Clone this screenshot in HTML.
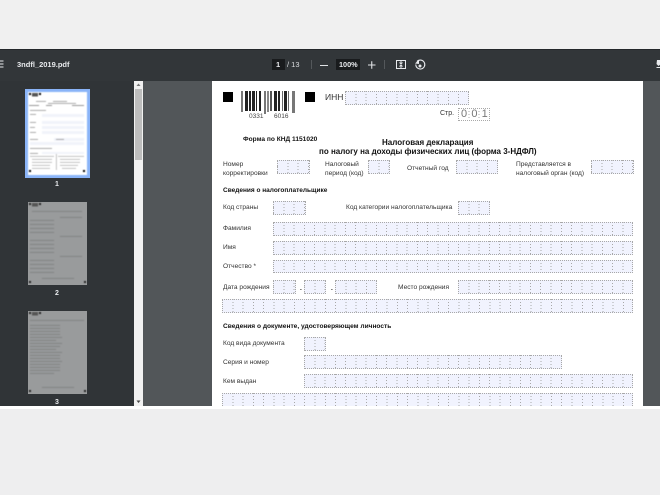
<!DOCTYPE html>
<html lang="ru"><head><meta charset="utf-8"><title>3ndfl_2019.pdf</title>
<style>
html,body{margin:0;padding:0;background:#eeeeef}
body{width:660px;height:495px;overflow:hidden;position:relative;font-family:"Liberation Sans",sans-serif}
div,span{position:absolute;box-sizing:border-box}
#w{left:0;top:0;width:660px;height:495px;filter:blur(.3px);background:#eeeeef}
.t{white-space:nowrap;color:#333;font-size:6.600px;line-height:9px}
.b{font-weight:bold;color:#111}
.f{border:1px dotted #a8a8a8;background-color:#f1f3fe;
background-image:repeating-linear-gradient(to bottom,#f1f3fe 0 2px,transparent 2px 3px),repeating-linear-gradient(to right,transparent 0 9.28px,#a8a8a8 9.28px 10.28px)}
.tb{color:#e8eaed;font-size:8px;line-height:10px;white-space:nowrap}
.th{filter:blur(.45px)}
</style></head><body><div id="w">
<div style="left:0;top:0;width:660px;height:49px;background:#f0f0f0"></div>
<div style="left:0;top:49px;width:660px;height:1px;background:#24272a"></div>
<div style="left:0;top:50px;width:660px;height:31px;background:#323639"></div>
<div style="left:0;top:81px;width:134px;height:325px;background:#303437"></div>
<div style="left:134px;top:81px;width:9px;height:325px;background:#f1f1f1"></div>
<div style="left:135px;top:89px;width:7px;height:71px;background:#bdbdbd"></div>
<svg style="position:absolute;left:134px;top:81px" width="9" height="325"><path d="M2.500 5L4.500 2.500L6.500 5Z" fill="#777"/><path d="M2.500 319.500L4.500 322L6.500 319.500Z" fill="#444"/></svg>
<div style="left:143px;top:81px;width:517px;height:325px;background:#525659"></div>
<div style="left:0;top:406px;width:660px;height:3px;background:#fff"></div>
<div style="left:212px;top:81px;width:431px;height:325px;background:#fff"></div>

<!-- toolbar -->
<svg style="position:absolute;left:0;top:60px" width="4" height="9"><path d="M0 1H3.500M0 4H3.500M0 7H3.500" stroke="#e8eaed" stroke-width="1"/></svg>
<div class="tb" style="left:17px;top:60px;font-weight:bold;font-size:7.500px">3ndfl_2019.pdf</div>
<div style="left:272px;top:59px;width:13px;height:11px;background:#191b1d"></div>
<div class="tb" style="left:276px;top:60px;font-size:7.500px;font-weight:bold">1</div>
<div class="tb" style="left:287px;top:60px;font-size:7.500px;color:#dcdee1">/ 13</div>
<div style="left:311px;top:60px;width:1px;height:9px;background:#54585b"></div>
<div style="left:320px;top:64.500px;width:7.500px;height:1px;background:#e0e2e5"></div>
<div style="left:336px;top:59px;width:24px;height:11px;background:#191b1d"></div>
<div class="tb" style="left:339px;top:60px;font-size:7.300px;font-weight:bold">100%</div>
<svg style="position:absolute;left:367px;top:60px" width="10" height="10"><path d="M1 5H8.500M4.750 1.200V8.800" stroke="#e0e2e5" stroke-width="1.100"/></svg>
<div style="left:384px;top:60px;width:1px;height:9px;background:#54585b"></div>
<svg style="position:absolute;left:394px;top:58px" width="14" height="14"><rect x="2.500" y="2.500" width="9" height="8" fill="none" stroke="#e8eaed" stroke-width="1"/><path d="M7 3V5.500M5.500 4.500L7 6L8.500 4.500M7 10V7.500M5.500 8.500L7 7L8.500 8.500" stroke="#e8eaed" stroke-width=".9" fill="none"/></svg>
<svg style="position:absolute;left:413px;top:58px" width="14" height="15"><path d="M4 3.500A4.500 4.500 0 1 1 2.800 6.500" fill="none" stroke="#e8eaed" stroke-width="1.100"/><path d="M2 5.500L6 1.800V6Z" fill="#e8eaed"/><circle cx="7" cy="8" r="1.500" fill="#e8eaed"/></svg>
<svg style="position:absolute;left:655px;top:59px" width="5" height="11"><path d="M2 1H5V3.500H6V5L3.500 7L1.500 5Z" fill="#e8eaed"/><path d="M1.500 8.500H5" stroke="#e8eaed" stroke-width="1"/></svg>

<!-- thumbnails -->
<div style="left:25px;top:89px;width:65px;height:89px;background:#8ab4f8"></div>
<svg class="th" style="position:absolute;left:28px;top:92px" width="59" height="83" viewBox="0 0 59 83">
<rect width="59" height="83" fill="#fff"/>
<g fill="#000"><rect x="1" y="1" width="2" height="2"/><rect x="11" y="1" width="2" height="2"/><rect x="1" y="78" width="2" height="2"/><rect x="55" y="78" width="2" height="2"/></g>
<rect x="4" y="1" width="6" height="3.500" fill="#555"/>
<g fill="#f1f3fa"><rect x="14" y="22" width="42" height="3"/><rect x="14" y="29" width="42" height="3"/><rect x="14" y="34" width="42" height="3"/><rect x="14" y="39" width="42" height="3"/><rect x="26" y="46" width="30" height="3"/><rect x="2" y="50" width="54" height="3"/><rect x="14" y="60" width="42" height="2"/></g>
<g fill="#999"><rect x="8" y="9" width="10" height=".8"/><rect x="25" y="9" width="14" height=".8"/><rect x="20" y="11" width="28" height=".8"/><rect x="1" y="13" width="10" height="1"/><rect x="18" y="13" width="6" height="1"/><rect x="44" y="13" width="12" height="1"/><rect x="2" y="18" width="16" height=".8"/><rect x="2" y="22" width="6" height=".8"/><rect x="2" y="30" width="6" height=".8"/><rect x="2" y="35" width="5" height=".8"/><rect x="2" y="40" width="6" height=".8"/><rect x="2" y="47" width="8" height=".8"/><rect x="28" y="47" width="8" height=".8"/><rect x="2" y="56" width="22" height=".8"/><rect x="2" y="61" width="8" height=".8"/></g>
<g fill="#aaa"><rect x="2" y="64" width="24" height=".7"/><rect x="30" y="64" width="26" height=".7"/><rect x="4" y="67" width="20" height=".7"/><rect x="32" y="67" width="20" height=".7"/><rect x="4" y="70" width="20" height=".7"/><rect x="32" y="70" width="20" height=".7"/><rect x="4" y="73" width="18" height=".7"/><rect x="32" y="73" width="18" height=".7"/><rect x="4" y="76" width="18" height=".7"/><rect x="34" y="76" width="14" height=".7"/><rect x="28" y="62" width=".7" height="16"/></g>
</svg>
<div style="left:28px;top:202px;width:59px;height:83px;background:#999b9c"></div>
<svg class="th" style="position:absolute;left:28px;top:202px" width="59" height="83" viewBox="0 0 59 83">
<g fill="#222"><rect x="1" y="1" width="2" height="2"/><rect x="11" y="1" width="2" height="2"/><rect x="1" y="79" width="2" height="2"/><rect x="56" y="79" width="2" height="2"/></g>
<rect x="4" y="1" width="6" height="3.500" fill="#555"/>
<g fill="#7c7e7f"><rect x="4" y="9" width="50" height=".8"/><rect x="32" y="15" width="22" height=".8"/><rect x="2" y="18" width="24" height=".8"/><rect x="2" y="22" width="24" height=".8"/><rect x="2" y="26" width="24" height=".8"/><rect x="2" y="30" width="24" height=".8"/><rect x="32" y="34" width="22" height=".8"/><rect x="2" y="38" width="24" height=".8"/><rect x="2" y="42" width="24" height=".8"/><rect x="2" y="46" width="24" height=".8"/><rect x="2" y="50" width="24" height=".8"/><rect x="32" y="54" width="22" height=".8"/><rect x="2" y="58" width="24" height=".8"/><rect x="2" y="62" width="24" height=".8"/><rect x="2" y="66" width="24" height=".8"/><rect x="2" y="70" width="24" height=".8"/><rect x="14" y="76" width="32" height=".8"/></g>
</svg>
<div style="left:28px;top:311px;width:59px;height:83px;background:#999b9c"></div>
<svg class="th" style="position:absolute;left:28px;top:311px" width="59" height="83" viewBox="0 0 59 83">
<g fill="#222"><rect x="1" y="1" width="2" height="2"/><rect x="11" y="1" width="2" height="2"/><rect x="1" y="79" width="2" height="2"/><rect x="56" y="79" width="2" height="2"/></g>
<rect x="4" y="1" width="6" height="3.500" fill="#555"/>
<g fill="#7c7e7f"><rect x="2" y="9" width="54" height=".8"/><rect x="2" y="14" width="30" height=".8"/><rect x="2" y="17" width="30" height=".8"/><rect x="2" y="20" width="30" height=".8"/><rect x="2" y="23" width="30" height=".8"/><rect x="2" y="26" width="32" height=".8"/><rect x="2" y="29" width="26" height=".8"/><rect x="2" y="32" width="32" height=".8"/><rect x="2" y="35" width="30" height=".8"/><rect x="2" y="38" width="26" height=".8"/><rect x="2" y="41" width="32" height=".8"/><rect x="2" y="44" width="30" height=".8"/><rect x="2" y="47" width="30" height=".8"/><rect x="2" y="50" width="32" height=".8"/><rect x="2" y="53" width="30" height=".8"/><rect x="2" y="56" width="30" height=".8"/><rect x="2" y="59" width="30" height=".8"/><rect x="2" y="62" width="24" height=".8"/><rect x="14" y="76" width="32" height=".8"/></g>
</svg>
<div class="tb" style="left:55px;top:180px;font-weight:bold;font-size:7px">1</div>
<div class="tb" style="left:55px;top:289px;font-weight:bold;font-size:7px">2</div>
<div class="tb" style="left:55px;top:398px;font-weight:bold;font-size:7px;height:8px;overflow:hidden">3</div>

<!-- page -->
<div style="left:223px;top:92px;width:10px;height:10px;background:#000"></div>
<div style="left:305px;top:92px;width:10px;height:10px;background:#000"></div>
<svg style="position:absolute;left:240px;top:90px" width="58" height="25" viewBox="0 0 58 25">
<g fill="#222"><rect x="1" y="1" width="2" height="21" fill="#777"/><rect x="5" y="1" width="3" height="20"/><rect x="9" y="1" width="2" height="20"/><rect x="12" y="1" width="3" height="20"/><rect x="16" y="1" width="1" height="20"/><rect x="19" y="1" width="2" height="20"/><rect x="24" y="1" width="2" height="23" fill="#777"/><rect x="27" y="1" width="2" height="21" fill="#888"/><rect x="30" y="1" width="2" height="20" fill="#555"/><rect x="34" y="1" width="3" height="20"/><rect x="38" y="1" width="2" height="20"/><rect x="42" y="1" width="1" height="20" fill="#666"/><rect x="44" y="1" width="3" height="20"/><rect x="48" y="1" width="1" height="20" fill="#666"/><rect x="52" y="1" width="3" height="22" fill="#777"/></g></svg>
<div class="t" style="left:249px;top:112px;font-size:6.500px;color:#444">0331</div>
<div class="t" style="left:274px;top:112px;font-size:6.500px;color:#444">6016</div>
<div class="t" style="left:325px;top:92px;font-size:8.500px;line-height:11px;color:#333">ИНН</div>
<div class="f" style="left:345px;top:91px;width:124px;height:14px"></div>
<div class="t" style="left:440px;top:109px;font-size:7px;line-height:10px">Стр.</div>
<div style="left:458px;top:108px;width:32px;height:13px;border:1px dotted #a8a8a8;background-image:repeating-linear-gradient(to bottom,#fff 0 2px,transparent 2px 3px),repeating-linear-gradient(to right,transparent 0 9.28px,#a8a8a8 9.28px 10.28px)"></div>
<div class="t" style="left:461px;top:107px;font-size:11px;line-height:14px;color:#777;letter-spacing:4.200px">001</div>
<div class="t b" style="left:243px;top:134.500px;font-size:6.600px">Форма по КНД 1151020</div>
<div class="t b" style="left:382px;top:138px;font-size:8px;line-height:10px">Налоговая декларация</div>
<div class="t b" style="left:319px;top:147px;font-size:8px;line-height:10px">по налогу на доходы физических лиц (форма 3-НДФЛ)</div>
<div class="t" style="left:223px;top:160px;line-height:9px">Номер<br>корректировки</div>
<div class="f" style="left:277px;top:160px;width:33px;height:14px"></div>
<div class="t" style="left:325px;top:160px;line-height:9px">Налоговый<br>период (код)</div>
<div class="f" style="left:368px;top:160px;width:22px;height:14px"></div>
<div class="t" style="left:407px;top:164px">Отчетный год</div>
<div class="f" style="left:456px;top:160px;width:42px;height:14px"></div>
<div class="t" style="left:516px;top:160px;line-height:9px">Представляется в<br>налоговый орган (код)</div>
<div class="f" style="left:591px;top:160px;width:43px;height:14px"></div>
<div class="t b" style="left:223px;top:185.500px;font-size:6.500px">Сведения о налогоплательщике</div>
<div class="t" style="left:223px;top:203px">Код страны</div>
<div class="f" style="left:273px;top:201px;width:33px;height:14px"></div>
<div class="t" style="left:346px;top:203px">Код категории налогоплательщика</div>
<div class="f" style="left:458px;top:201px;width:32px;height:14px"></div>
<div class="t" style="left:223px;top:224px">Фамилия</div>
<div class="f" style="left:273px;top:222px;width:360px;height:13.500px"></div>
<div class="t" style="left:223px;top:243px">Имя</div>
<div class="f" style="left:273px;top:241px;width:360px;height:13.500px"></div>
<div class="t" style="left:223px;top:261.500px">Отчество *</div>
<div class="f" style="left:273px;top:259.500px;width:360px;height:13.500px"></div>
<div class="t" style="left:223px;top:282.500px">Дата рождения</div>
<div class="f" style="left:273px;top:280px;width:23px;height:14px"></div>
<div class="t b" style="left:300px;top:284px">.</div>
<div class="f" style="left:304px;top:280px;width:22px;height:14px"></div>
<div class="t b" style="left:331px;top:284px">.</div>
<div class="f" style="left:335px;top:280px;width:42px;height:14px"></div>
<div class="t" style="left:398px;top:282.500px">Место рождения</div>
<div class="f" style="left:458px;top:280px;width:175px;height:14px"></div>
<div class="f" style="left:222px;top:299px;width:411px;height:14px"></div>
<div class="t b" style="left:223px;top:321.500px;font-size:6.600px">Сведения о документе, удостоверяющем личность</div>
<div class="t" style="left:223px;top:339px">Код вида документа</div>
<div class="f" style="left:304px;top:337px;width:22px;height:13.500px"></div>
<div class="t" style="left:223px;top:357.500px">Серия и номер</div>
<div class="f" style="left:304px;top:355px;width:258px;height:14px"></div>
<div class="t" style="left:223px;top:376.500px">Кем выдан</div>
<div class="f" style="left:304px;top:374px;width:329px;height:14px"></div>
<div class="f" style="left:222px;top:393px;width:411px;height:13px;border-bottom:0"></div>
</div></body></html>
